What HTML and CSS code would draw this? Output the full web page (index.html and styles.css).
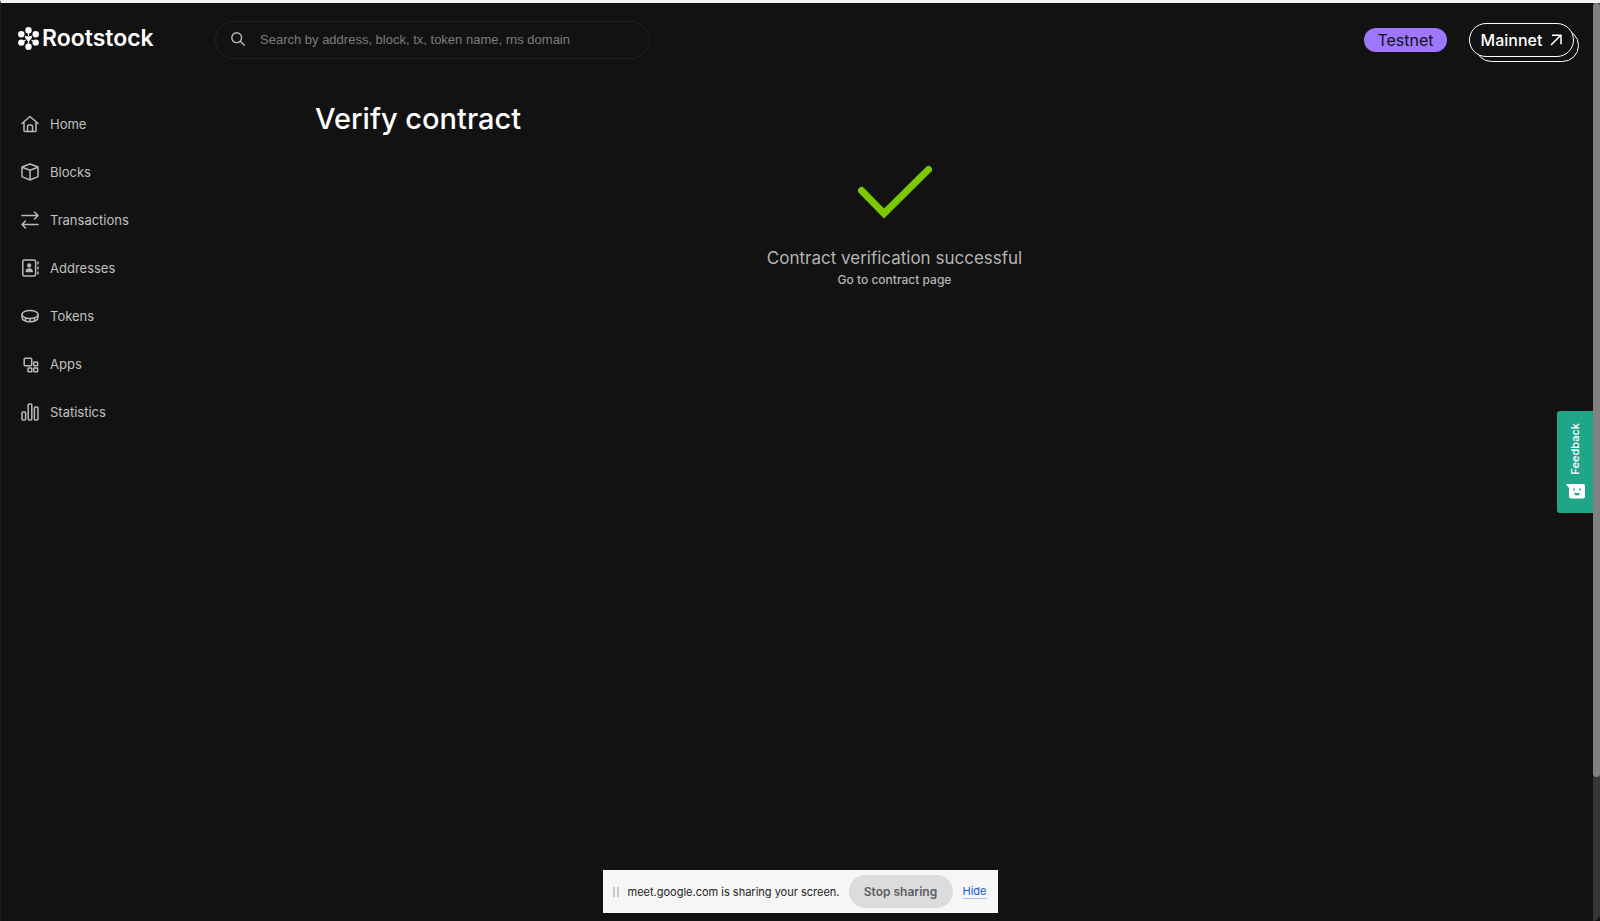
FILE: index.html
```
<!DOCTYPE html>
<html lang="en">
<head>
    <meta charset="UTF-8">
    <meta name="viewport" content="width=device-width, initial-scale=1.0">
    <title>Verify contract - Rootstock Explorer</title>
    <link rel="stylesheet" href="styles.css">
</head>
<body>
    <header class="header">
        <a class="logo" href="#">
            <svg class="logo-mark" viewBox="0 0 21 23" fill="#fff">
                <path d="M10.500 3v6M10.500 13v5M3.500 15.500l4-2.500M17.500 15.500l-4-2.500" stroke="#fff" stroke-width="1.200" fill="none"/>
                <path d="M7.300 8.800l3.200.8 3.200-.8.300 2-3.500 4.200-3.500-4.200z"/>
                <circle cx="10.500" cy="3.300" r="3.200"/>
                <circle cx="3.300" cy="7.300" r="3.200"/>
                <circle cx="17.700" cy="7.300" r="3.200"/>
                <circle cx="3.300" cy="15.600" r="3.200"/>
                <circle cx="17.700" cy="15.600" r="3.200"/>
                <circle cx="10.500" cy="19.700" r="3.200"/>
            </svg>
            <span>Rootstock</span>
        </a>
        <form class="search">
            <svg viewBox="0 0 14 14" fill="none" stroke="#b9b9b9" stroke-width="1.400" stroke-linecap="round">
                <circle cx="5.700" cy="5.700" r="4.900"/>
                <path d="M9.300 9.300l4 4"/>
            </svg>
            <input type="text" aria-label="Search" placeholder="Search by address, block, tx, token name, rns domain">
        </form>
        <div class="networks">
            <span class="network-current">Testnet</span>
            <a class="network-link" href="#">
                Mainnet
                <svg viewBox="0 0 12 12" fill="none" stroke="#fff" stroke-width="1.500">
                    <path d="M1 11L10.500 1.500M2 1.200h9v9"/>
                </svg>
            </a>
        </div>
    </header>

    <div class="layout">
        <nav class="sidebar">
            <a href="#">
                <svg viewBox="0 0 18 18"><path d="M1 8.500L9 1.500l8 7M3 7v8.500q0 1 1 1h10q1 0 1-1V7M6.500 16v-4.500q0-1.500 1.500-1.500h2q1.500 0 1.500 1.500V16"/></svg>
                Home
            </a>
            <a href="#">
                <svg viewBox="0 0 18 18"><path d="M9 1l7.500 2.700q.5.300.5.800v8.500q0 .7-.5.900L9 17l-7.500-3.100Q1 13.700 1 13V4.500q0-.5.500-.8zM1.200 4.200L9 7.200l7.800-3M9 7.200V17"/></svg>
                Blocks
            </a>
            <a href="#">
                <svg viewBox="0 0 18 18"><path d="M1 4.500h16M13.500 1L17 4.500 13.500 8M17 13.500H1M4.500 10L1 13.500 4.500 17"/></svg>
                Transactions
            </a>
            <a href="#">
                <svg viewBox="0 0 18 18">
                    <rect x="1.800" y="1" width="12.800" height="16" rx="1.500"/>
                    <path d="M17 3v2M17 8v2M17 13v2"/>
                    <circle cx="8.200" cy="6.500" r="1.400" fill="#b9b9b9"/>
                    <path d="M5.200 12.500q.3-2.500 3-2.500t3 2.500z" fill="#b9b9b9"/>
                </svg>
                Addresses
            </a>
            <a href="#">
                <svg viewBox="0 0 18 18">
                    <ellipse cx="9" cy="7.500" rx="8" ry="4"/>
                    <path d="M1 7.500v3C1 13 4.500 14.800 9 14.800s8-1.800 8-4.300v-3M4.500 11v2.500M9 11.500v3M13.500 11v2.500"/>
                </svg>
                Tokens
            </a>
            <a href="#">
                <svg viewBox="0 0 18 18">
                    <rect x="3.200" y="3.200" width="7.500" height="7.500" rx="1"/>
                    <rect x="12.800" y="7" width="3.800" height="3.800" rx=".5"/>
                    <rect x="7" y="13" width="3.800" height="3.800" rx=".5"/>
                    <rect x="12.800" y="13" width="3.800" height="3.800" rx=".5"/>
                </svg>
                Apps
            </a>
            <a href="#">
                <svg viewBox="0 0 18 18">
                    <rect x="1" y="9" width="3.600" height="8" rx="1"/>
                    <rect x="7.200" y="1" width="3.600" height="16" rx="1"/>
                    <rect x="13.400" y="4" width="3.600" height="13" rx="1"/>
                </svg>
                Statistics
            </a>
        </nav>

        <main class="content">
            <h1>Verify contract</h1>
            <div class="result">
                <svg viewBox="0 0 76 54" fill="none" stroke="#7ac800" stroke-width="7" stroke-linecap="round">
                    <path d="M4.500 25.500L27 48.500 71.500 4.500"/>
                </svg>
                <h2>Contract verification successful</h2>
                <a href="#">Go to contract page</a>
            </div>
        </main>
    </div>

    <button class="feedback" type="button">
        <svg viewBox="0 0 19 15">
            <path d="M0 0h17q2 0 2 2v10.500q0 2-2 2H5q-2 0-2-2V4z" fill="#fff"/>
            <path d="M8 4.500v2M14 4.500v2" stroke="#1fa588" stroke-width="1.500"/>
            <path d="M8 9h6q-.5 2.500-3 2.500T8 9z" fill="#1fa588"/>
        </svg>
        <span>Feedback</span>
    </button>

    <div class="scrollbar"><div class="scrollbar-thumb"></div></div>

    <div class="share-bar">
        <span class="grip"></span>
        <span class="share-text">meet.google.com is sharing your screen.</span>
        <button type="button">Stop sharing</button>
        <a href="#">Hide</a>
    </div>
</body>
</html>
```
FILE: styles.css
```
* { box-sizing: border-box; }

body {
    margin: 0;
    min-height: 100vh;
    background: #121212;
    border-top: 3px solid #f5f0f1;
    border-left: 1px solid #1f1f1f;
    padding-right: 7px;
    color: #fff;
    font-family: Inter, "Liberation Sans", sans-serif;
}

a { color: inherit; text-decoration: none; }
svg { display: block; flex: none; }

/* header */
.header { display: flex; align-items: center; height: 74px; padding: 0 13px 0 17px; }
.logo {
    display: flex;
    align-items: center;
    gap: 3px;
    width: 197px;
    padding-bottom: 4px;
    font-size: 23px;
    font-weight: 600;
    line-height: 24px;
}
.logo-mark { width: 21px; height: 23px; }

.search {
    display: flex;
    align-items: center;
    gap: 15px;
    width: 435px;
    height: 38px;
    padding: 0 15px 2px;
    border: 1px solid #232323;
    border-radius: 19px;
}
.search svg { width: 14px; height: 14px; }
.search input {
    flex: 1;
    min-width: 0;
    padding: 0;
    border: 0;
    outline: 0;
    background: none;
    color: #fff;
    font: 13px "Liberation Sans", sans-serif;
}
.search input::placeholder { color: #7c7c7c; }

.networks { display: flex; align-items: center; gap: 22px; margin-left: auto; }
.network-current {
    width: 83px;
    border-radius: 12px;
    background: #9e76ff;
    color: #121212;
    font-size: 16px;
    line-height: 24px;
    text-align: center;
}
.network-link {
    position: relative;
    display: flex;
    align-items: center;
    justify-content: center;
    gap: 8px;
    width: 105px;
    height: 34px;
    margin-right: 6px;
    border: 1px solid #fff;
    border-radius: 17px;
    background: #121212;
    font-size: 16px;
    font-weight: 500;
}
.network-link::before {
    content: "";
    position: absolute;
    z-index: -1;
    inset: 5px -6px -6px 5px;
    border: 1px solid #fff;
    border-radius: 17px;
}
.network-link svg { width: 12px; height: 12px; }

/* page */
.layout { display: flex; }
.sidebar { width: 195px; padding: 23px 0 0 20px; }
.sidebar a {
    display: flex;
    align-items: center;
    gap: 11px;
    height: 48px;
    color: #c0c0c0;
    font-size: 13px;
}
.sidebar svg {
    width: 18px;
    height: 18px;
    fill: none;
    stroke: #b9b9b9;
    stroke-width: 1.5;
    stroke-linecap: round;
    stroke-linejoin: round;
}

.content { flex: 1; padding: 22px 119px; }
.content h1 { margin: 0; font-size: 29px; font-weight: 500; line-height: 40px; }
.result { display: flex; flex-direction: column; align-items: center; padding-top: 26px; color: #b5b5b5; }
.result svg { width: 76px; height: 54px; }
.result h2 { margin: 27px 0 0; font-size: 17px; font-weight: 400; line-height: 24px; }
.result a { font-size: 12px; font-weight: 500; line-height: 20px; }

/* widgets over the page */
.feedback {
    position: fixed;
    top: 411px;
    right: 7px;
    display: flex;
    flex-direction: column-reverse;
    align-items: center;
    justify-content: center;
    gap: 10px;
    width: 36px;
    height: 102px;
    padding: 0 0 2px;
    border: 0;
    border-radius: 3px 0 0 3px;
    background: #1fa588;
    color: #fff;
    font: 500 11px Inter, sans-serif;
}
.feedback span { writing-mode: vertical-rl; transform: rotate(180deg); }
.feedback svg { width: 19px; height: 15px; }

.scrollbar { position: fixed; top: 3px; right: 0; bottom: 0; width: 7px; background: #363636; border-radius: 0 0 7px 0; }
.scrollbar-thumb { height: 84.3%; border-radius: 4px; background: #808080; }

.share-bar {
    position: fixed;
    right: 0;
    bottom: 8px;
    left: 0;
    display: flex;
    align-items: center;
    width: 395px;
    height: 43px;
    margin: 0 auto;
    padding: 0 11px 0 10px;
    background: #f6f6f6;
    color: #222;
    font-size: 11px;
    white-space: nowrap;
}
.grip { width: 6px; height: 10px; margin-right: 9px; border: solid #c8c8c8; border-width: 0 2px; }
.share-bar button {
    width: 104px;
    height: 33px;
    margin: 0 10px 0 auto;
    padding: 0;
    border: 0;
    border-radius: 17px;
    background: #dcdcdc;
    color: #5c5f63;
    font: 600 12px Inter, sans-serif;
}
.share-bar a { color: #1558d6; border-bottom: 1px solid #a9c1ee; }
```
